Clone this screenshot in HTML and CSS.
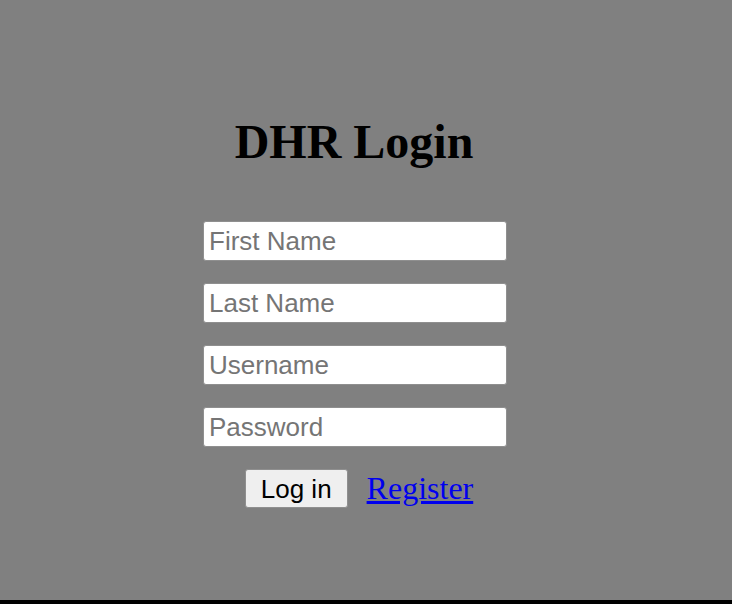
FILE: index.html
```html
<!DOCTYPE html>
<html lang="en">
<head>
<meta charset="utf-8">
<title>DHR Login</title>
<link rel="stylesheet" href="styles.css">
</head>
<body>
<main class="login">
  <h1 class="login-title">DHR Login</h1>
  <form class="login-form">
    <input class="field" type="text" placeholder="First Name">
    <input class="field" type="text" placeholder="Last Name">
    <input class="field" type="text" placeholder="Username">
    <input class="field" type="password" placeholder="Password">
    <div class="actions">
      <button class="btn" type="button">Log in</button>
      <a class="link" href="#">Register</a>
    </div>
  </form>
</main>
</body>
</html>
```
FILE: styles.css
```css
html {
  background: #000;
  margin: 0;
  padding: 0;
}
body {
  margin: 0;
  height: 600px;
  background: #808080;
  overflow: hidden;
}
.login {
  width: 304px;
  margin-left: 203px;
  padding-top: 114px;
}
.login-title {
  margin: 0 0 51px;
  padding-right: 2px;
  font-family: "Liberation Serif", "Times New Roman", serif;
  font-weight: bold;
  font-size: 48px;
  line-height: 56px;
  text-align: center;
  color: #000;
}
.login-form {
  display: flex;
  flex-direction: column;
  gap: 22px;
}
.field {
  box-sizing: border-box;
  width: 304px;
  height: 40px;
  margin: 0;
  padding: 0 5px;
  border: 1px solid #8f8f8f;
  border-radius: 3px;
  background: #fff;
  font-family: "Liberation Sans", Arial, sans-serif;
  font-size: 26px;
  color: #000;
}
.field::placeholder {
  color: #757575;
}
.actions {
  display: flex;
  justify-content: center;
  align-items: flex-start;
  gap: 19px;
  padding-left: 8px;
}
.btn {
  box-sizing: border-box;
  height: 39px;
  padding: 0 15px;
  border: 1px solid #8f8f8f;
  border-radius: 3px;
  background: #efefef;
  font-family: "Liberation Sans", Arial, sans-serif;
  font-size: 26px;
  line-height: 30px;
  color: #000;
}
.link {
  margin-top: 1px;
  font-family: "Liberation Serif", "Times New Roman", serif;
  font-size: 32px;
  line-height: 37px;
  color: #0000ee;
  text-decoration: underline;
}
```
